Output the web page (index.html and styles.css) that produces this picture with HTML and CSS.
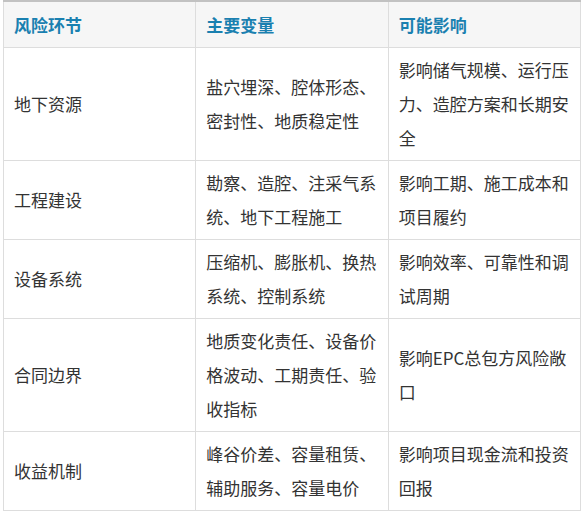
FILE: index.html
```html
<!DOCTYPE html>
<html lang="zh-CN">
<head>
<meta charset="utf-8">
<link rel="stylesheet" href="styles.css">
</head>
<body>
<div class="wrap">
<table class="risk">
<thead>
<tr><th>风险环节</th><th>主要变量</th><th>可能影响</th></tr>
</thead>
<tbody>
<tr><td>地下资源</td><td>盐穴埋深、腔体形态、密封性、地质稳定性</td><td>影响储气规模、运行压力、造腔方案和长期安全</td></tr>
<tr><td>工程建设</td><td>勘察、造腔、注采气系统、地下工程施工</td><td>影响工期、施工成本和项目履约</td></tr>
<tr><td>设备系统</td><td>压缩机、膨胀机、换热系统、控制系统</td><td>影响效率、可靠性和调试周期</td></tr>
<tr><td>合同边界</td><td>地质变化责任、设备价格波动、工期责任、验收指标</td><td>影响EPC总包方风险敞口</td></tr>
<tr><td>收益机制</td><td>峰谷价差、容量租赁、辅助服务、容量电价</td><td>影响项目现金流和投资回报</td></tr>
</tbody>
</table>
</div>
</body>
</html>
```
FILE: styles.css
```css
html, body {
  margin: 0;
  padding: 0;
  background: #ffffff;
}
.wrap {
  padding: 0 4px 0 3px;
}
.risk {
  width: 100%;
  border-collapse: collapse;
  table-layout: fixed;
  font-family: "Noto Sans CJK SC", "Noto Sans", sans-serif;
  font-size: 17px;
  line-height: 34px;
  color: #333333;
  border-top: 2px solid #c2c2c2;
}
.risk th,
.risk td {
  border: 1px solid #dddddd;
  padding: 5px 10px;
  text-align: left;
  vertical-align: middle;
  word-break: break-all;
}
.risk th {
  background: #f6f6f6;
  color: #1a80b0;
  font-weight: bold;
  padding-top: 6px;
  border-top: none;
}
```
